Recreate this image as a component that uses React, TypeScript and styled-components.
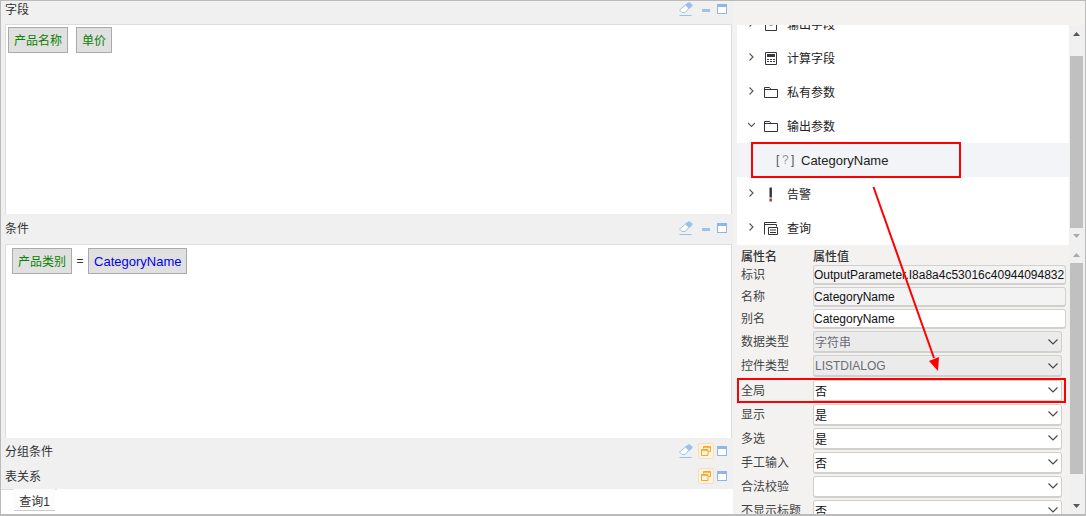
import React from "react";
import styled, { createGlobalStyle } from "styled-components";

const Global = createGlobalStyle`
  html, body { margin: 0; padding: 0; background: #fff; overflow: hidden; }
  * { box-sizing: border-box; }
  body { font-family: "Liberation Sans", "Noto Sans CJK SC", sans-serif; font-size: 12px; color: #333; }
`;

const Page = styled.div`
  position: relative;
  width: 1086px;
  height: 516px;
  overflow: hidden;
`;
const Frame = styled.div`
  display: flex;
  width: 100%;
  height: 100%;
  border: 1px solid #bbb;
  border-bottom-width: 2px;
  background: #f3f2f1;
`;
const LeftColumn = styled.div`
  display: flex;
  flex-direction: column;
  width: 732px;
  flex: none;
  background: #f0f0f0;
`;
const PanelHeader = styled.div<{ $h: number; $lift?: number }>`
  display: flex;
  align-items: center;
  flex: none;
  height: ${(p) => p.$h}px;
  padding: 0 6px ${(p) => p.$lift ?? 0}px 4px;
  line-height: 16px;
  color: #333;
`;
const PanelTitle = styled.span`
  flex: 1;
`;
const Tools = styled.div`
  display: flex;
  align-items: center;
  gap: 3px;
  margin-bottom: 2px;
`;
const EraserSlot = styled.div`
  display: flex;
  width: 14px;
  height: 14px;
  margin-right: 2px;
`;
const MiddleSlot = styled.div`
  display: flex;
  align-items: center;
  justify-content: center;
  width: 16px;
  height: 16px;
`;
const MinusBar = styled.div`
  width: 8px;
  height: 3px;
  margin-top: 3px;
  background: #9fc2ea;
`;
const RestoreBox = styled.div`
  display: flex;
  align-items: center;
  justify-content: center;
  width: 16px;
  height: 16px;
  border: 1px solid #fbdcb4;
  border-radius: 2px;
  background: #fdf4e6;
`;
const WindowBox = styled.div`
  width: 10px;
  height: 10px;
  border: 1px solid #8fb7e6;
  border-top-width: 3px;
  background: #fff;
`;
const DropBox = styled.div<{ $h: number }>`
  flex: none;
  display: flex;
  align-items: flex-start;
  height: ${(p) => p.$h}px;
  margin: 0 1px 0 4px;
  padding: 2px;
  gap: 8px;
  background: #fff;
  border: 1px solid #ddd;
  border-bottom: 0;
`;
const ConditionRow = styled.div`
  display: flex;
  align-items: center;
  margin: 1px 0 0 4px;
`;
const Chip = styled.div<{ $kind: "field" | "param" }>`
  display: flex;
  align-items: center;
  height: 26px;
  padding: 0 5px ${(p) => (p.$kind === "param" ? 0 : 2)}px;
  border: 1px solid #aaa;
  background: #e0e0e0;
  color: ${(p) => (p.$kind === "param" ? "#0000ee" : "#0a8000")};
  font-size: ${(p) => (p.$kind === "param" ? 13 : 12)}px;
  white-space: nowrap;
`;
const Equals = styled.span`
  width: 16px;
  text-align: center;
  color: #333;
`;
const TabArea = styled.div`
  flex: 1;
  background: #fff;
`;
const TabStrip = styled.div`
  width: 56px;
  border-top: 1px solid #ddd;
`;
const Tab = styled.div`
  width: 41px;
  height: 22px;
  margin: -1px 0 0 13px;
  padding-top: 5px;
  line-height: 16px;
  text-align: center;
  background: #fcfcfc;
  border-bottom: 1px solid #ccc;
  color: #333;
`;
const RightColumn = styled.div`
  display: flex;
  flex-direction: column;
  flex: 1;
  padding-top: 24px;
  min-width: 0;
`;
const TreeSection = styled.div`
  display: flex;
  flex: none;
  height: 220px;
  padding-left: 4px;
`;
const Tree = styled.div`
  display: flex;
  flex-direction: column;
  justify-content: flex-end;
  flex: 1;
  overflow: hidden;
  background: #fff;
`;
const TreeRow = styled.div<{ $selected?: boolean }>`
  display: flex;
  align-items: center;
  flex: none;
  height: 34px;
  padding-left: ${(p) => (p.$selected ? 39 : 11)}px;
  background: ${(p) => (p.$selected ? "#f2f4f8" : "transparent")};
  color: #222;
`;
const TreeLabel = styled.span`
  line-height: 14px;
  margin-top: 2px;
`;
const Chevron = styled.svg`
  flex: none;
  width: 7px;
  height: 8px;
  margin: -3px 8px 0 0;
`;
const TreeIcon = styled.svg`
  flex: none;
  width: 16px;
  height: 16px;
  margin: -1px 8px 0 0;
`;
const ParamMark = styled.span`
  flex: none;
  width: 25px;
  letter-spacing: -0.4px;
  color: #555;
  font-size: 12px;
  white-space: pre;
`;
const ParamMarkQ = styled.span`
  color: #999;
`;
const ParamName = styled.span`
  font-size: 13px;
`;
const ScrollBar = styled.div`
  display: flex;
  flex-direction: column;
  align-items: center;
  flex: none;
  width: 16px;
  padding-right: 1px;
  background: #f0f0f0;
`;
const ScrollArrow = styled.svg<{ $mt: number }>`
  flex: none;
  width: 7px;
  height: 4px;
  margin-top: ${(p) => p.$mt}px;
`;
const ScrollThumb = styled.div<{ $h: number; $mt: number }>`
  flex: none;
  width: 13px;
  height: ${(p) => p.$h}px;
  margin-top: ${(p) => p.$mt}px;
  background: #c0c0c0;
`;
const PropSection = styled.div`
  display: flex;
  flex: 1;
  min-height: 0;
  overflow: hidden;
`;
const PropList = styled.div`
  display: flex;
  flex-direction: column;
  flex: 1;
  gap: 2px;
  padding: 6px 0 0 8px;
  min-width: 0;
`;
const PropHead = styled.div`
  display: grid;
  grid-template-columns: 72px 1fr;
  flex: none;
  height: 12px;
  line-height: 13px;
  font-weight: 500;
  color: #333;
`;
const PropRow = styled.div<{ $extra?: number }>`
  display: grid;
  grid-template-columns: 72px 1fr;
  align-items: center;
  flex: none;
  margin-top: ${(p) => p.$extra ?? 0}px;
`;
const PropLabel = styled.span`
  line-height: 14px;
  color: #444;
  white-space: nowrap;
`;
const TextValue = styled.div<{ $readOnly?: boolean }>`
  height: 20px;
  margin-right: 3px;
  line-height: 18px;
  border: 1px solid #d2d0cc;
  border-bottom-width: 2px;
  border-radius: 3px;
  background: ${(p) => (p.$readOnly ? "#f3f3f3" : "#fff")};
  color: #111;
  white-space: nowrap;
  overflow: hidden;
`;
const SelectValue = styled.div<{ $disabled?: boolean }>`
  display: flex;
  align-items: center;
  justify-content: space-between;
  height: 22px;
  margin-right: 7px;
  padding: 0 3px ${(p) => (p.$disabled ? 0 : 1)}px 1px;
  border: 1px solid #d2d0cc;
  border-bottom-width: 2px;
  border-radius: 3px;
  background: ${(p) => (p.$disabled ? "#ebebeb" : "#fff")};
  color: ${(p) => (p.$disabled ? "#6b6b78" : "#111")};
`;
const SelectArrow = styled.svg`
  flex: none;
  width: 10px;
  height: 6px;
`;
const Overlay = styled.svg`
  position: absolute;
  left: 0;
  top: 0;
  width: 1086px;
  height: 516px;
  pointer-events: none;
`;
const HighlightBox = styled.div<{ $l: number; $t: number; $w: number; $h: number }>`
  position: absolute;
  left: ${(p) => p.$l}px;
  top: ${(p) => p.$t}px;
  width: ${(p) => p.$w}px;
  height: ${(p) => p.$h}px;
  border: 2px solid #f00;
  pointer-events: none;
`;

const Eraser = () => (
  <svg width="14" height="14" viewBox="0 0 14 14">
    <path d="M.5 8 6.5 3l3.5 3.2L6.2 10.5H3Z" fill="#fff" stroke="#9cc0ea" />
    <path d="M6 2.8 9.2.5c.5-.4 1-.4 1.5 0l2.6 2c.5.4.5 1 .1 1.5L10.4 7Z" fill="#9cc0ea" />
    <path d="M.5 13.5h12" stroke="#9cc0ea" />
  </svg>
);
const RestoreIcon = () => (
  <svg width="10" height="10" viewBox="0 0 10 10">
    <path d="M2.5 2.5V.5h7v5H7.5" fill="none" stroke="#f5a623" />
    <path d="M.5 3.5h6.5v6H.5Z" fill="none" stroke="#f5a623" />
    <path d="M.5 4h6.5M2.5 1h7" stroke="#f5a623" strokeWidth="1.4" />
  </svg>
);

const Toolbar = ({ eraser, middle }: { eraser?: boolean; middle: "min" | "restore" }) => (
  <Tools>
    <EraserSlot>{eraser && <Eraser />}</EraserSlot>
    <MiddleSlot>
      {middle === "min" ? (
        <MinusBar />
      ) : (
        <RestoreBox>
          <RestoreIcon />
        </RestoreBox>
      )}
    </MiddleSlot>
    <WindowBox />
  </Tools>
);

const ChevronRight = () => (
  <Chevron viewBox="0 0 7 8">
    <path d="M1.5.5 5 4 1.5 7.5" fill="none" stroke="#555" strokeWidth="1.1" />
  </Chevron>
);
const ChevronDown = () => (
  <Chevron viewBox="0 0 7 8">
    <path d="M0 2 3.5 5.5 7 2" fill="none" stroke="#555" strokeWidth="1.1" />
  </Chevron>
);
const FieldIcon = () => (
  <TreeIcon viewBox="0 0 16 16">
    <path d="M2.5 2.5h11v12h-11Z" fill="none" stroke="#333" />
    <path d="M6.5 6h3M6.5 9h3" stroke="#333" />
  </TreeIcon>
);
const CalcIcon = () => (
  <TreeIcon viewBox="0 0 16 16">
    <path d="M2.5 2.5h11v12h-11Z" fill="none" stroke="#3a3040" />
    <path d="M4 4h8v3H4Z" fill="#3a3a3a" />
    <path d="M4 9h2v1H4ZM7 9h2v1H7ZM10 9h2v1h-2ZM4 11h2v1H4ZM7 11h2v1H7ZM10 11h2v1h-2Z" fill="#3a3a3a" />
  </TreeIcon>
);
const FolderIcon = () => (
  <TreeIcon viewBox="0 0 16 16">
    <path d="M1.5 3.5h5l1.5 2h6.5v8h-13ZM1.5 5.5h6.5" fill="none" stroke="#333" />
  </TreeIcon>
);
const AlertIcon = () => (
  <TreeIcon viewBox="0 0 16 16">
    <path d="M6.5 1.5h2.4v10H6.5Z" fill="#333" />
    <path d="M6.5 12.5h2.4v3H6.5Z" fill="#a33" />
  </TreeIcon>
);
const QueryIcon = () => (
  <TreeIcon viewBox="0 0 16 16">
    <path d="M1.5 14.5v-12h12M1.5 4.5h12v2" fill="none" stroke="#333" />
    <path d="M5.5 7.5h9v7h-9ZM7 10h6M7 12.5h6" fill="none" stroke="#333" />
  </TreeIcon>
);
const ArrowUp = ({ color, mt }: { color: string; mt: number }) => (
  <ScrollArrow $mt={mt} viewBox="0 0 7 4">
    <path d="M3.5 0 7 4H0Z" fill={color} />
  </ScrollArrow>
);
const ArrowDown = ({ color, mt }: { color: string; mt: number }) => (
  <ScrollArrow $mt={mt} viewBox="0 0 7 4">
    <path d="M0 0H7L3.5 4Z" fill={color} />
  </ScrollArrow>
);

const TextProp = ({ label, value, readOnly }: { label: string; value: string; readOnly?: boolean }) => (
  <PropRow>
    <PropLabel>{label}</PropLabel>
    <TextValue $readOnly={readOnly}>{value}</TextValue>
  </PropRow>
);
const SelectProp = ({ label, value, disabled, extra }: { label: string; value: string; disabled?: boolean; extra?: number }) => (
  <PropRow $extra={extra}>
    <PropLabel>{label}</PropLabel>
    <SelectValue $disabled={disabled}>
      <span>{value}</span>
      <SelectArrow viewBox="0 0 10 6">
        <path d="M.5.5 5 5 9.5.5" fill="none" stroke="#444" strokeWidth="1.1" />
      </SelectArrow>
    </SelectValue>
  </PropRow>
);

export default function App() {
  return (
    <Page>
      <Global />
      <Frame>
        <LeftColumn>
          <PanelHeader $h={23} $lift={6}>
            <PanelTitle>字段</PanelTitle>
            <Toolbar eraser middle="min" />
          </PanelHeader>
          <DropBox $h={190}>
            <Chip $kind="field">产品名称</Chip>
            <Chip $kind="field">单价</Chip>
          </DropBox>
          <PanelHeader $h={30}>
            <PanelTitle>条件</PanelTitle>
            <Toolbar eraser middle="min" />
          </PanelHeader>
          <DropBox $h={194}>
            <ConditionRow>
              <Chip $kind="field">产品类别</Chip>
              <Equals>=</Equals>
              <Chip $kind="param">CategoryName</Chip>
            </ConditionRow>
          </DropBox>
          <PanelHeader $h={27}>
            <PanelTitle>分组条件</PanelTitle>
            <Toolbar eraser middle="restore" />
          </PanelHeader>
          <PanelHeader $h={24}>
            <PanelTitle>表关系</PanelTitle>
            <Toolbar middle="restore" />
          </PanelHeader>
          <TabArea>
            <TabStrip>
              <Tab>查询1</Tab>
            </TabStrip>
          </TabArea>
        </LeftColumn>
        <RightColumn>
          <TreeSection>
            <Tree>
              <TreeRow>
                <ChevronRight />
                <FieldIcon />
                <TreeLabel>输出字段</TreeLabel>
              </TreeRow>
              <TreeRow>
                <ChevronRight />
                <CalcIcon />
                <TreeLabel>计算字段</TreeLabel>
              </TreeRow>
              <TreeRow>
                <ChevronRight />
                <FolderIcon />
                <TreeLabel>私有参数</TreeLabel>
              </TreeRow>
              <TreeRow>
                <ChevronDown />
                <FolderIcon />
                <TreeLabel>输出参数</TreeLabel>
              </TreeRow>
              <TreeRow $selected>
                <ParamMark>
                  [ <ParamMarkQ>?</ParamMarkQ> ]
                </ParamMark>
                <ParamName>CategoryName</ParamName>
              </TreeRow>
              <TreeRow>
                <ChevronRight />
                <AlertIcon />
                <TreeLabel>告警</TreeLabel>
              </TreeRow>
              <TreeRow>
                <ChevronRight />
                <QueryIcon />
                <TreeLabel>查询</TreeLabel>
              </TreeRow>
            </Tree>
            <ScrollBar>
              <ArrowUp color="#555" mt={7} />
              <ScrollThumb $mt={20} $h={172} />
              <ArrowDown color="#aaa" mt={6} />
            </ScrollBar>
          </TreeSection>
          <PropSection>
            <PropList>
              <PropHead>
                <span>属性名</span>
                <span>属性值</span>
              </PropHead>
              <TextProp label="标识" value="OutputParameter.I8a8a4c53016c40944094832" readOnly />
              <TextProp label="名称" value="CategoryName" readOnly />
              <TextProp label="别名" value="CategoryName" />
              <SelectProp label="数据类型" value="字符串" disabled />
              <SelectProp label="控件类型" value="LISTDIALOG" disabled />
              <SelectProp label="全局" value="否" extra={1} />
              <SelectProp label="显示" value="是" />
              <SelectProp label="多选" value="是" />
              <SelectProp label="手工输入" value="否" />
              <SelectProp label="合法校验" value="" />
              <SelectProp label="不显示标题" value="否" />
            </PropList>
            <ScrollBar>
              <ArrowUp color="#aaa" mt={8} />
              <ScrollThumb $mt={6} $h={211} />
              <ArrowDown color="#555" mt={30} />
            </ScrollBar>
          </PropSection>
        </RightColumn>
      </Frame>
      <HighlightBox $l={751} $t={142} $w={210} $h={36} />
      <HighlightBox $l={737} $t={378} $w={329} $h={25} />
      <Overlay viewBox="0 0 1086 516">
        <path d="M873.5 187 934 358" stroke="#f00" strokeWidth="2" fill="none" />
        <path d="M938 371 929 361 939 357Z" fill="#f00" />
      </Overlay>
    </Page>
  );
}
